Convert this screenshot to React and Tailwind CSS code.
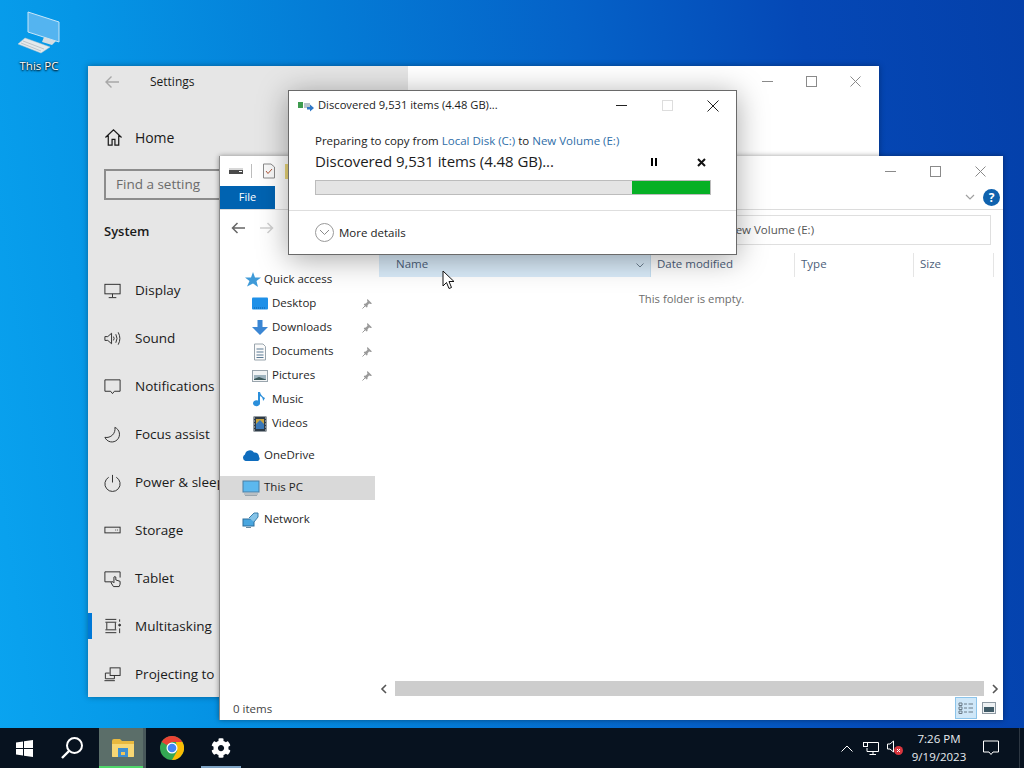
import React from "react";
import { FaCog } from "react-icons/fa";

const Thin = ({ s = 20, vb = 20, children, className = "", sw = 1 }) => (
  <svg width={s} height={s} viewBox={`0 0 ${vb} ${vb}`} fill="none" stroke="currentColor" strokeWidth={sw} className={"shrink-0 " + className}>
    {children}
  </svg>
);

const settingsIcons = {
  Home: <path d="M1.5 10 L10 2 L18.5 10 M4.5 8 V18 H8.5 V12 H11.5 V18 H15.5 V8" strokeWidth="1.3" />,
  Display: <><rect x="2" y="3.5" width="16" height="10" /><path d="M10 13.5 V17 M6 17.5 H14" /></>,
  Sound: <><path d="M2 8 H5 L9 4.500 V15.500 L5 12 H2 Z" /><path d="M11 8 Q12.500 10 11 12 M13.500 5.500 Q16 10 13.500 14.500 M16 3.500 Q19.500 10 16 16.500" /></>,
  Notifications: <path d="M2 3 H18 V15 H12 L10 17.500 L8 15 H2 Z" />,
  "Focus assist": <path d="M12.500 2.500 A8 8 0 1 1 2 13 A9 9 0 0 0 12.500 2.500 Z" />,
  "Power & sleep": <><path d="M10 2 V10" /><path d="M6 4.500 A8 8 0 1 0 14 4.500" /></>,
  Storage: <><rect x="2" y="6.500" width="16" height="6" /><path d="M13 9.500 H13.800 M15 9.500 H15.800" /></>,
  Tablet: <><path d="M9 13.500 H2 V3 H18 V9" /><path d="M11 18.500 L8.500 14.500 Q8.500 13 10.500 13.500 L11.500 14.500 V8.500 Q12.500 7.500 13.500 8.500 V11.500 L18 13 V16 L17 18.500 H11" /></>,
  Multitasking: <><path d="M2.500 2.500 H14 M2.500 5.500 H14 M4 6 V13 M13 6 V13 M2.500 13.500 H14 M2.500 16.500 H14 M17.500 2.500 V5 M17.500 12 V17" /><circle cx="17.500" cy="8.500" r="1" fill="currentColor" /></>,
  "Projecting to": <><rect x="7.500" y="3" width="10.500" height="8" /><path d="M7 8.500 H2.500 V14.500 H12 V11 M1.500 16.500 H12.500" /></>,
};

const settingsRows = ["Display", "Sound", "Notifications", "Focus assist", "Power & sleep", "Storage", "Tablet", "Multitasking", "Projecting to"];

function WinCtl({ pr = "pr-[12px]", gap = "gap-[34px]", c = "#8a8a8a" }) {
  return (
    <div className={"flex items-center " + gap + " " + pr}>
      <svg width="11" height="11" viewBox="0 0 11 11" stroke={c} fill="none"><path d="M0 5.500 H11" /></svg>
      <svg width="11" height="11" viewBox="0 0 11 11" stroke={c} fill="none"><rect x="0.500" y="0.500" width="10" height="10" /></svg>
      <svg width="11" height="11" viewBox="0 0 11 11" stroke={c} fill="none"><path d="M0.500 0.500 L10.500 10.500 M10.500 0.500 L0.500 10.500" /></svg>
    </div>
  );
}

function SettingsWindow() {
  return (
    <div className="absolute left-[88px] top-[66px] w-[791px] h-[631px] flex bg-white shadow-[0_0_6px_rgba(0,0,0,0.35)]">
      <div className="w-[320px] h-full bg-[#e6e6e6] flex flex-col text-[#1a1a1a]">
        <div className="h-[32px] flex items-center pl-[16px] shrink-0">
          <svg width="16" height="14" viewBox="0 0 16 14" fill="none" stroke="#a8a8a8" strokeWidth="1.400"><path d="M15 7 H2 M7.500 1.500 L2 7 L7.500 12.500" /></svg>
          <span className="ml-[30px] text-[12px]">Settings</span>
        </div>
        <div className="h-[60px] mt-[9px] pl-[16px] flex items-center shrink-0">
          <Thin s={19}>{settingsIcons.Home}</Thin>
          <span className="ml-[12px] text-[14px] tracking-[-0.1px]">Home</span>
        </div>
        <div className="ml-[16px] mt-[2px] h-[31px] w-[260px] border-2 border-[#8c8c8c] flex items-center pl-[10px] text-[13.500px] leading-[24px] pb-[1px] text-[#6b6b6b] shrink-0">Find a setting</div>
        <div className="mt-[21px] ml-[16px] text-[13px] font-semibold h-[20px] leading-[20px] shrink-0">System</div>
        <div className="mt-[25px] flex flex-col">
          {settingsRows.map((r) => (
            <div key={r} className="h-[48px] flex items-center pl-[15px] relative shrink-0 whitespace-nowrap">
              {r === "Multitasking" && <div className="absolute left-0 top-[11px] w-[4px] h-[26px] bg-[#0078d7]" />}
              <Thin s={19} className="text-[#2b2b2b]">{settingsIcons[r]}</Thin>
              <span className="ml-[13px] text-[13.500px] leading-[18px]">{r}</span>
            </div>
          ))}
        </div>
      </div>
      <div className="flex-1">
        <div className="flex justify-end items-center h-[30px]">
          <WinCtl pr="pr-[18px]" gap="gap-[33px]" />
        </div>
      </div>
    </div>
  );
}

const Pin = () => (
  <svg width="12" height="12" viewBox="0 0 12 12" className="absolute left-[141px] top-[6px]" fill="#9a9a9a">
    <path d="M6.500 1 L11 5.500 L9.800 6 L8 5.500 L6.500 7.500 L6.500 9 L5.500 9.500 L2.800 6.800 L3.200 5.800 L4.800 5.500 L6.500 3.800 L6 2 Z" />
    <path d="M4 8 L1.500 10.500" stroke="#9a9a9a" />
  </svg>
);

const navIcons = {
  star: <path d="M9 1 L11 6.500 L17 6.500 L12.500 10 L14 16 L9 12.500 L3 15.500 L5.500 10 L1 6.500 L7 6.500 Z" fill="#3f9ad8" />,
  desktop: <><rect x="1" y="2.500" width="16" height="12" rx="1" fill="#1e90e8" /><path d="M3 13 H15" stroke="#0b5fa8" strokeDasharray="1 1" /></>,
  down: <path d="M6.500 1 H11.500 V8 H17 L9 16 L1 8 H6.500 Z" fill="#3b86d3" />,
  doc: <><path d="M3.500 1 H12 L14.500 3.500 V17 H3.500 Z" fill="#fafafa" stroke="#9aa5ad" /><path d="M5.500 6 H12.500 M5.500 9 H12.500 M5.500 12 H12.500 M5.500 14.500 H12.500" stroke="#5a7a94" /></>,
  pic: <><rect x="1.500" y="3.500" width="15" height="11" fill="#f2f4f5" stroke="#9aa5ad" /><path d="M3 8 H15 V13 H3 Z" fill="#9fb4bf" /><path d="M3 12 L8 10 L15 12.500 V13 H3 Z" fill="#3d5a5c" /></>,
  music: <path d="M9 1 V12 A3.500 3 0 1 1 7 9.500 V1 H9 Q10 5 14 7 Q13 9 12 10 Q12 6 9 5" fill="#2b8fdb" />,
  video: <><rect x="2.500" y="1.500" width="13" height="15" fill="#2d3a46" /><rect x="5" y="4" width="8" height="10" fill="#3a78b8" /><path d="M5 9 L9 5 L13 9 V4 H5 Z" fill="#c9a43f" /><path d="M3.500 2.500 V16 M14.500 2.500 V16" stroke="#d8d8d8" strokeDasharray="1 2" /></>,
  cloud: <path d="M3.500 14 A3.500 3.500 0 0 1 3 7.500 A5 5 0 0 1 12 5.500 A4.300 4.300 0 0 1 17 10 A2.500 2.500 0 0 1 16 14 Z" fill="#0f6cbd" />,
  pc: <><rect x="1" y="2" width="16" height="11" fill="#5cb8ee" stroke="#4a7ea4" /><path d="M2 15 H16 M3 16.500 H15" stroke="#9aa5ad" /></>,
  net: <><rect x="1" y="8" width="11" height="7" fill="#49a6df" stroke="#2e6f9c" /><path d="M4 16.500 H9" stroke="#6a8ba0" /><path d="M7 7 L12 2 H16 V6 L12 11" fill="#86c4e8" stroke="#3a7fab" /></>,
};

const qa = [
  ["desktop", "Desktop", true],
  ["down", "Downloads", true],
  ["doc", "Documents", true],
  ["pic", "Pictures", true],
  ["music", "Music", false],
  ["video", "Videos", false],
];

function NavPane() {
  return (
    <div className="w-[155px] shrink-0 flex flex-col pt-[22px] text-[11.500px] text-[#1f1f1f]">
      <div className="h-[24px] flex items-center pl-[24px]">
        <svg width="18" height="18" viewBox="0 0 18 18" className="shrink-0">{navIcons.star}</svg>
        <span className="ml-[2px] pb-[2px]">Quick access</span>
      </div>
      {qa.map(([ic, t, pin]) => (
        <div key={t} className="h-[24px] flex items-center pl-[31px] relative">
          <svg width="18" height="18" viewBox="0 0 18 18" className="shrink-0">{navIcons[ic]}</svg>
          <span className="ml-[3px] pb-[2px]">{t}</span>
          {pin && <Pin />}
        </div>
      ))}
      <div className="h-[24px] mt-[8px] flex items-center pl-[22px]">
        <svg width="18" height="18" viewBox="0 0 18 18" className="shrink-0">{navIcons.cloud}</svg>
        <span className="ml-[4px] pb-[2px]">OneDrive</span>
      </div>
      <div className="h-[24px] mt-[8px] flex items-center pl-[22px] bg-[#d9d9d9]">
        <svg width="18" height="18" viewBox="0 0 18 18" className="shrink-0">{navIcons.pc}</svg>
        <span className="ml-[4px] pb-[2px]">This PC</span>
      </div>
      <div className="h-[24px] mt-[8px] flex items-center pl-[22px]">
        <svg width="18" height="18" viewBox="0 0 18 18" className="shrink-0">{navIcons.net}</svg>
        <span className="ml-[4px] pb-[2px]">Network</span>
      </div>
    </div>
  );
}

function Explorer() {
  return (
    <div className="absolute left-[219px] top-[156px] w-[784px] h-[564px] bg-white flex flex-col shadow-[0_0_5px_rgba(0,0,0,0.4)] border-l border-[#8a8a8a]">
      <div className="h-[30px] shrink-0 flex items-center justify-between">
        <div className="flex items-center pl-[9px]">
          <svg width="14" height="8" viewBox="0 0 14 8"><rect x="0" y="1" width="14" height="3" fill="#d8d8d8" /><rect x="0" y="3" width="14" height="4" fill="#4a4a4a" /><rect x="10" y="4" width="3" height="1" fill="#fff" /></svg>
          <div className="w-px h-[14px] bg-[#bcbcbc] ml-[8px]" />
          <svg width="14" height="16" viewBox="0 0 14 16" fill="none" className="ml-[10px]"><path d="M1.500 1 H9 L12.500 4 V15 H1.500 Z" fill="#fafafa" stroke="#8a8a8a" /><path d="M4 8 L6 10.500 L10 6" stroke="#b0573a" /></svg>
          <div className="w-[6px] h-[15px] bg-[#ecd87a] ml-[9px]" />
        </div>
        <WinCtl pr="pr-[17px]" />
      </div>
      <div className="h-[24px] shrink-0 flex items-stretch border-b border-[#dcdcdc] relative">
        <div className="w-[55px] h-[23px] bg-[#0063b1] text-white text-[11px] flex items-center justify-center">File</div>
        <svg width="10" height="7" viewBox="0 0 10 7" fill="none" stroke="#a0a0a0" strokeWidth="1.200" className="absolute left-[745px] top-[8px]"><path d="M1 1 L5 5 L9 1" /></svg>
        <div className="absolute left-[763px] top-[3px] w-[17px] h-[17px] rounded-full bg-[#0f62ae] text-white text-[12px] font-bold flex items-center justify-center leading-none">?</div>
      </div>
      <div className="h-[36px] shrink-0 flex items-center relative">
        <svg width="14" height="12" viewBox="0 0 14 12" fill="none" stroke="#666" strokeWidth="1.500" className="ml-[11px]"><path d="M14 6 H1.500 M6.500 1 L1.500 6 L6.500 11" /></svg>
        <svg width="14" height="12" viewBox="0 0 14 12" fill="none" stroke="#d0d0d0" strokeWidth="1.500" className="ml-[15px]"><path d="M0 6 H12.500 M7.500 1 L12.500 6 L7.500 11" /></svg>
        <div className="absolute right-[12px] top-[5px] h-[30px] w-[400px] border border-[#dfdfdf] flex items-center pl-[135px] text-[11.500px] text-[#555] whitespace-nowrap">New Volume (E:)</div>
      </div>
      <div className="flex-1 flex min-h-0">
        <NavPane />
        <div className="flex-1 flex flex-col relative min-w-0">
          <svg width="8" height="5" viewBox="0 0 8 5" fill="none" stroke="#9aa5ad" className="absolute left-[141px] top-[0px]"><path d="M0.500 4 L4 0.500 L7.500 4" /></svg>
          <div className="h-[24px] mt-[7px] flex items-stretch text-[11.500px] text-[#4c607a] shrink-0 ml-[4px]">
            <div className="w-[272px] bg-[#d9ebf9] flex items-center pl-[17px] justify-between pr-[6px] border-r border-[#c5dff2]">
              <span className="pb-[2px]">Name</span>
              <svg width="8" height="5" viewBox="0 0 8 5" fill="none" stroke="#6d7f90"><path d="M0.500 0.500 L4 4 L7.500 0.500" /></svg>
            </div>
            <div className="w-[144px] flex items-center pl-[6px] pb-[2px] border-r border-[#e5e5e5]">Date modified</div>
            <div className="w-[119px] flex items-center pl-[6px] pb-[2px] border-r border-[#e5e5e5]">Type</div>
            <div className="w-[80px] flex items-center pl-[6px] pb-[2px] border-r border-[#e5e5e5]">Size</div>
          </div>
          <div className="text-center text-[11.250px] text-[#6d6d6d] mt-[14px] pl-[5px]">This folder is empty.</div>
          <div className="mt-auto h-[15px] flex items-center ml-[4px] shrink-0">
            <svg width="8" height="10" viewBox="0 0 8 10" fill="none" stroke="#555" strokeWidth="1.600" className="ml-[1px] shrink-0"><path d="M6 1 L2 5 L6 9" /></svg>
            <div className="flex-1 h-full bg-[#cdcdcd] ml-[7px] mr-[7px]" />
            <svg width="8" height="10" viewBox="0 0 8 10" fill="none" stroke="#555" strokeWidth="1.600" className="mr-[4px] shrink-0"><path d="M2 1 L6 5 L2 9" /></svg>
          </div>
        </div>
      </div>
      <div className="h-[24px] shrink-0 flex items-center pl-[13px] text-[11.500px] text-[#444] relative">
        <span className="relative top-[1px]">0 items</span>
        <div className="absolute left-[735px] top-[1px] w-[22px] h-[22px] bg-[#cfe7f8] border border-[#8cc4ea] flex items-center justify-center">
          <svg width="16" height="14" viewBox="0 0 16 14" fill="none" stroke="#6b7a86"><path d="M1 2 H4 V4.500 H1 Z M1 6 H4 V8.500 H1 Z M1 10 H4 V12.500 H1 Z M6 3 H9 M10.500 3 H15 M6 7 H9 M10.500 7 H15 M6 11 H9 M10.500 11 H15" /></svg>
        </div>
        <svg width="14" height="12" viewBox="0 0 14 12" className="absolute left-[762px] top-[6px]"><rect x="0.500" y="0.500" width="13" height="11" fill="#eef1f3" stroke="#8f9aa3" /><rect x="2" y="5" width="10" height="5" fill="#3f5a66" /></svg>
      </div>
    </div>
  );
}

function Dialog() {
  return (
    <div className="absolute left-[288px] top-[90px] w-[449px] h-[165px] bg-white border border-[#6a6a6a] shadow-[0_4px_28px_rgba(0,0,0,0.35)] flex flex-col text-[#1c1c1c]">
      <div className="h-[29px] shrink-0 flex items-center relative">
        <svg width="16" height="12" viewBox="0 0 16 12" className="ml-[9px]"><rect x="0" y="2" width="5" height="6" fill="#3e9b4f" /><rect x="6" y="3" width="6" height="5" fill="#b8c4cc" /><path d="M9 7 H12 V4.500 L16 8 L12 11.500 V9.500 H9 Z" fill="#2f78c8" /></svg>
        <span className="ml-[4px] text-[11.200px] whitespace-nowrap">Discovered 9,531 items (4.48 GB)...</span>
        <div className="absolute left-[327px] top-[14px] w-[11px] h-px bg-[#222]" />
        <div className="absolute left-[373px] top-[9px] w-[11px] h-[11px] border border-[#dddddd]" />
        <svg width="12" height="12" viewBox="0 0 12 12" stroke="#222" fill="none" className="absolute left-[418px] top-[9px]"><path d="M0.500 0.500 L11.500 11.500 M11.500 0.500 L0.500 11.500" /></svg>
      </div>
      <div className="pl-[26px] mt-[12px] h-[18px] text-[11.500px] leading-[18px] whitespace-nowrap shrink-0">
        Preparing to copy from <span className="text-[#2f6ea8]">Local Disk (C:)</span> to <span className="text-[#2f6ea8]">New Volume (E:)</span>
      </div>
      <div className="pl-[26px] h-[24px] flex items-center shrink-0 relative">
        <span className="text-[15px] tracking-[-0.06px] whitespace-nowrap relative top-[-1px]">Discovered 9,531 items (4.48 GB)...</span>
        <div className="absolute left-[362px] top-[8px] flex gap-[2px]"><div className="w-[2px] h-[8px] bg-black" /><div className="w-[2px] h-[8px] bg-black" /></div>
        <svg width="9" height="9" viewBox="0 0 9 9" stroke="#111" strokeWidth="2" className="absolute left-[408px] top-[8px]"><path d="M1 1 L8 8 M8 1 L1 8" /></svg>
      </div>
      <div className="ml-[26px] mt-[6px] w-[396px] h-[15px] shrink-0 bg-[#e4e4e4] border border-[#bcbcbc] flex justify-end">
        <div className="w-[78px] h-full bg-[#06b025]" />
      </div>
      <div className="mt-[15px] border-t border-[#dedede] flex-1 flex items-center pl-[26px]">
        <div className="w-[19px] h-[19px] rounded-full border border-[#9a9a9a] flex items-center justify-center">
          <svg width="11" height="7" viewBox="0 0 11 7" fill="none" stroke="#8a8a8a"><path d="M1 1 L5.500 5.500 L10 1" /></svg>
        </div>
        <span className="ml-[5px] text-[11.500px]">More details</span>
      </div>
    </div>
  );
}

function DesktopIcon() {
  return (
    <div className="absolute left-[9px] top-[11px] w-[60px] flex flex-col items-center text-white text-[11.500px]">
      <svg width="46" height="44" viewBox="0 0 46 44">
        <path d="M12 1 L43 11 V31 L12 21 Z" fill="#54b4f0" stroke="#c8e6f8" />
        <path d="M28 26 L40 30 L36 34 L26 31 Z" fill="#d5dde2" />
        <path d="M9 27 L34 36 L25 42 L2 33 Z" fill="#e4e9ec" stroke="#c0cad0" strokeWidth="0.500" />
        <path d="M7 30 L28 38 M5 32 L25 40" stroke="#aab4ba" strokeWidth="0.700" />
      </svg>
      <span className="mt-[3px] leading-[16px] font-medium [text-shadow:0_1px_2px_#000,0_0_2px_#000]">This PC</span>
    </div>
  );
}

function Taskbar() {
  return (
    <div className="absolute left-0 right-0 bottom-0 h-[40px] bg-[#07121f] flex items-stretch text-white">
      <div className="w-[48px] flex items-center justify-center">
        <svg width="17" height="17" viewBox="0 0 17 17" fill="white"><path d="M0 2.500 L7 1.500 V8 H0 Z M8 1.300 L17 0 V8 H8 Z M0 9 H7 V15.500 L0 14.500 Z M8 9 H17 V17 L8 15.700 Z" /></svg>
      </div>
      <div className="w-[51px] flex items-center justify-center pr-[3px]">
        <svg width="24" height="24" viewBox="0 0 24 24" fill="none" stroke="white" strokeWidth="2"><circle cx="14.500" cy="9.500" r="7.500" /><path d="M9 15 L2 22" strokeWidth="2.400" /></svg>
      </div>
      <div className="w-[47px] bg-[#5b6e69] flex items-center justify-center relative">
        <svg width="24" height="20" viewBox="0 0 24 20"><path d="M1 3 Q1 1 3 1 H9 L11 3 H23 V18 Q23 19 22 19 H2 Q1 19 1 18 Z" fill="#e8b93f" /><path d="M1 6 H23 V18 Q23 19 22 19 H2 Q1 19 1 18 Z" fill="#f7d774" /><rect x="7" y="10" width="10" height="9" fill="#3f8fd0" /><rect x="10" y="14" width="4" height="3" fill="#f0c65a" /></svg>
        <div className="absolute left-0 right-[3px] bottom-0 h-[2px] bg-[#4fd66a]" />
        <div className="absolute right-0 top-0 bottom-0 w-[3px] bg-[#48585a]" />
      </div>
      <div className="w-[51px] flex items-center justify-center">
        <svg width="24" height="24" viewBox="0 0 24 24">
          <circle cx="12" cy="12" r="12" fill="#34a853" />
          <path d="M1.600 6 A12 12 0 0 1 22.400 6 L12 6 L6.800 9 Z" fill="#ea4335" />
          <path d="M22.400 6 A12 12 0 0 1 12 24 L17.200 15 L16 6 Z" fill="#fbbc05" />
          <circle cx="12" cy="12" r="5.500" fill="white" />
          <circle cx="12" cy="12" r="4.300" fill="#4285f4" />
        </svg>
      </div>
      <div className="w-[40px] ml-[4px] flex items-center justify-center relative">
        <FaCog size={20} color="white" />
        <div className="absolute left-0 right-0 bottom-0 h-[2px] bg-[#7ea3c4]" />
      </div>
      <div className="ml-auto flex items-center">
        <svg width="12" height="7" viewBox="0 0 12 7" fill="none" stroke="white"><path d="M0.500 6.500 L6 1 L11.500 6.500" /></svg>
        <svg width="16" height="14" viewBox="0 0 16 14" fill="none" stroke="white" className="ml-[10px]"><path d="M4 1.500 H15.500 V10.500 H4 V7 M10 10.500 V13.500 M6.500 13.500 H13" /><rect x="0.500" y="1.500" width="4" height="4" fill="#07121f" /></svg>
        <div className="relative ml-[8px] w-[16px] h-[16px]">
          <svg width="10" height="13" viewBox="0 0 10 13" fill="none" stroke="white" className="absolute left-0 top-0"><path d="M0.500 4 H3 L6.500 1 V12 L3 9 H0.500 Z" /></svg>
          <svg width="9" height="9" viewBox="0 0 9 9" className="absolute left-[7px] top-[6px]"><circle cx="4.500" cy="4.500" r="4.500" fill="#d9363e" /><path d="M3 3 L6 6 M6 3 L3 6" stroke="white" /></svg>
        </div>
        <div className="ml-[4px] w-[64px] text-center text-[11.500px] leading-[18px] text-[#e8ecf0]">
          <div>7:26 PM</div>
          <div>9/19/2023</div>
        </div>
        <div className="w-[48px] pr-[8px] flex items-center justify-center">
          <svg width="16" height="16" viewBox="0 0 16 16" fill="none" stroke="white"><path d="M0.500 1 H15.500 V12 H10 L8 14.500 L6 12 H0.500 Z" /></svg>
        </div>
        <div className="w-px self-stretch bg-[#2d3742] mr-[4px]" />
      </div>
    </div>
  );
}

export default function App() {
  return (
    <div
      className="relative w-[1024px] h-[768px] overflow-hidden bg-[linear-gradient(82deg,#0aa4f0_0%,#0596e6_16%,#047cd6_38%,#0562c8_60%,#0548b6_80%,#0440aa_100%)]"
      style={{ fontFamily: '"Open Sans","Noto Sans",sans-serif' }}
    >
      <DesktopIcon />
      <SettingsWindow />
      <Explorer />
      <Dialog />
      <svg width="14" height="20" viewBox="0 0 14 20" className="absolute left-[442px] top-[270px]"><path d="M1 1 V16 L4.500 12.500 L7 18.500 L9.500 17.500 L7 11.500 H12 Z" fill="white" stroke="#111" /></svg>
      <Taskbar />
    </div>
  );
}
